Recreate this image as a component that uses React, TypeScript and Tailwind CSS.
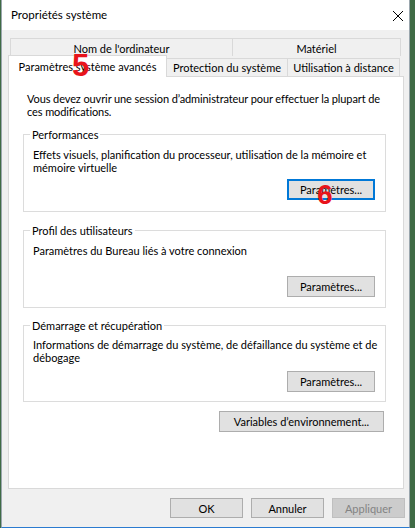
import type { ReactNode } from "react";
import clsx from "clsx";

function Btn({
  children,
  className = "",
  focused = false,
  disabled = false,
}: {
  children: ReactNode;
  className?: string;
  focused?: boolean;
  disabled?: boolean;
}) {
  return (
    <button
      className={clsx(
        "flex items-center justify-center whitespace-nowrap text-[11px] leading-none",
        focused
          ? "border-2 border-[#0078d7] bg-[#e1e1e1] text-black"
          : disabled
            ? "border border-[#bfbfbf] bg-[#cccccc] text-[#838383]"
            : "border border-[#adadad] bg-[#e1e1e1] text-black",
        className
      )}
    >
      {children}
    </button>
  );
}

function Group({
  title,
  children,
  className = "",
}: {
  title: string;
  children: ReactNode;
  className?: string;
}) {
  return (
    <fieldset
      className={clsx(
        "ml-[14px] flex w-[363px] min-w-0 flex-col border border-[#dcdcdc] pl-[9px]",
        className
      )}
    >
      <legend className="-ml-[3px] px-[2px] text-[11px] leading-[13px]">
        {title}
      </legend>
      {children}
    </fieldset>
  );
}

export default function App() {
  return (
    <div className="relative flex h-[528px] w-[415px] bg-[#3f6b45] font-['Lato','Liberation_Sans',sans-serif] text-black">
      <div className="ml-[1px] flex h-[528px] w-[409px] flex-col border-x border-b border-x-[#9aa6ad] border-b-[#2b7bd0] bg-[#f0f0f0]">
        {/* Title bar */}
        <div className="flex h-[30px] items-center justify-between bg-white pl-[9px]">
          <span className="text-[11.5px]">Propriétés système</span>
          <svg
            width="10"
            height="10"
            viewBox="0 0 10 10"
            className="mr-[6px] mt-[1px]"
          >
            <path d="M0 0L10 10M10 0L0 10" stroke="#000" strokeWidth="1" />
          </svg>
        </div>

        {/* Tabs */}
        <div className="ml-[6px] mt-[8px] flex w-[396px] flex-col whitespace-nowrap">
          <div className="ml-[2px] flex h-[18px] text-[11px]">
            <div className="flex w-[223px] items-center justify-center border-l border-t border-r border-[#d9d9d9] pt-[3px]">
              Nom de l'ordinateur
            </div>
            <div className="flex w-[168px] items-center justify-center border-t border-r border-[#d9d9d9] pt-[3px]">
              Matériel
            </div>
          </div>
          <div className="flex h-[20px] items-end text-[11px]">
            <div className="relative z-10 -mb-[1px] flex h-[22px] w-[159px] items-start justify-center border-x border-t border-[#d9d9d9] bg-white pt-[3px]">
              Paramètres système avancés
            </div>
            <div className="flex h-[18px] w-[121px] items-center justify-center border-t border-r border-[#d9d9d9] pt-[2px]">
              Protection du système
            </div>
            <div className="flex h-[18px] w-[112px] items-center justify-center border-t border-r border-[#d9d9d9] pt-[2px]">
              Utilisation à distance
            </div>
          </div>

          {/* Tab panel */}
          <div className="flex h-[413px] flex-col border border-[#d9d9d9] bg-white text-[11px] leading-[13px]">
            <p className="ml-[18px] mt-[15px] tracking-[-0.1px]">
              Vous devez ouvrir une session d’administrateur pour effectuer la plupart de
              <br />
              ces modifications.
            </p>

            <Group title="Performances" className="mt-[10px] pb-[11px] pt-[7px]">
              <p>
                Effets visuels, planification du processeur, utilisation de la mémoire et
                <br />
                mémoire virtuelle
              </p>
              <Btn focused className="mr-[10px] mt-[5px] h-[21px] w-[88px] self-end">
                Paramètres...
              </Btn>
            </Group>

            <Group title="Profil des utilisateurs" className="mt-[12px] pb-[10px] pt-[7px]">
              <p>Paramètres du Bureau liés à votre connexion</p>
              <Btn className="mr-[10px] mt-[19px] h-[21px] w-[88px] self-end">
                Paramètres...
              </Btn>
            </Group>

            <Group title="Démarrage et récupération" className="mt-[11px] pb-[9px] pt-[6px]">
              <p>
                Informations de démarrage du système, de défaillance du système et de
                <br />
                débogage
              </p>
              <Btn className="mr-[10px] mt-[7px] h-[21px] w-[88px] self-end">
                Paramètres...
              </Btn>
            </Group>

            <Btn className="mr-[19px] mt-[9px] h-[21px] w-[165px] self-end">
              Variables d’environnement...
            </Btn>
          </div>
        </div>

        {/* Dialog buttons */}
        <div className="mt-[9px] flex justify-end gap-[8px] pr-[4px]">
          <Btn className="h-[20px] w-[73px]">OK</Btn>
          <Btn className="h-[20px] w-[73px]">Annuler</Btn>
          <Btn disabled className="h-[20px] w-[73px]">
            Appliquer
          </Btn>
        </div>
      </div>

      {/* Red annotation numbers */}
      <span className="absolute left-[72px] top-[50px] z-20 font-['Liberation_Sans',sans-serif] text-[31px] font-bold leading-none text-[#e8141b]">
        5
      </span>
      <span className="absolute left-[317px] top-[181px] z-20 font-['Liberation_Sans',sans-serif] text-[28px] font-bold leading-none text-[#e8141b]">
        6
      </span>
    </div>
  );
}
